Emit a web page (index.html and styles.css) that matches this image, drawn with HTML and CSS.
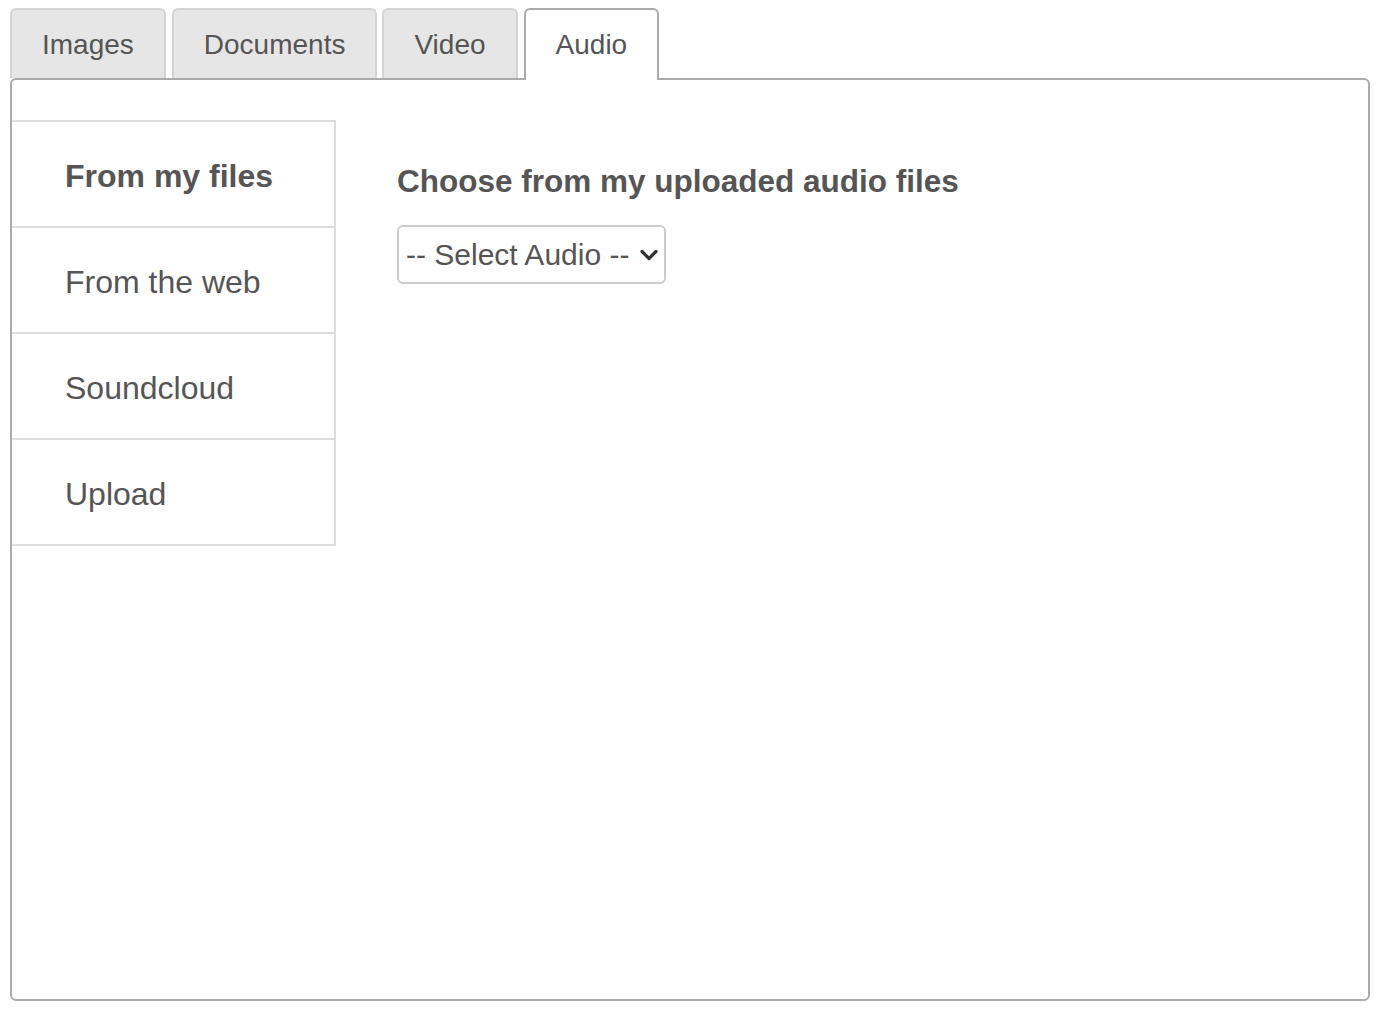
FILE: index.html
```html
<!DOCTYPE html>
<html lang="en">
<head>
<meta charset="utf-8">
<title>Media picker</title>
<link rel="stylesheet" href="styles.css">
</head>
<body>
<div class="picker">
  <div class="tabs">
    <div class="tab">Images</div>
    <div class="tab">Documents</div>
    <div class="tab">Video</div>
    <div class="tab active">Audio</div>
  </div>
  <div class="panel">
    <ul class="side">
      <li class="side-item current">From my files</li>
      <li class="side-item">From the web</li>
      <li class="side-item">Soundcloud</li>
      <li class="side-item">Upload</li>
    </ul>
    <div class="content">
      <h2 class="title">Choose from my uploaded audio files</h2>
      <div class="select-wrap">
        <select class="select">
          <option>-- Select Audio --</option>
        </select>
        <svg class="chev" width="20" height="14" viewBox="0 0 20 14"><path d="M3 3.5 L10 10.5 L17 3.5" fill="none" stroke="#333" stroke-width="3.2" stroke-linecap="round" stroke-linejoin="round"/></svg>
      </div>
    </div>
  </div>
</div>
</body>
</html>
```

FILE: styles.css
```css
* { box-sizing: border-box; }
html, body { margin: 0; padding: 0; background: #fff; }
body {
  font-family: "Liberation Sans", Arial, Helvetica, sans-serif;
  color: #555;
}
.picker {
  padding: 8px 0 0 10px;
  width: 1370px;
}
.tabs {
  display: flex;
  align-items: flex-end;
  position: relative;
  z-index: 2;
}
.tab {
  height: 70px;
  padding: 2px 30px 0;
  margin-right: 6px;
  display: flex;
  align-items: center;
  font-size: 28px;
  color: #555;
  background: #e6e6e6;
  border: 2px solid #d4d4d4;
  border-bottom: none;
  border-radius: 6px 6px 0 0;
}
.tab:nth-child(2) { margin-right: 5px; }
.tab.active {
  background: #fff;
  border-color: #aaa;
  height: 72px;
  margin-bottom: -2px;
  padding-bottom: 2px;
}
.panel {
  height: 923px;
  border: 2px solid #aaa;
  border-radius: 6px;
  padding-top: 40px;
  display: flex;
  align-items: flex-start;
}
.side {
  list-style: none;
  margin: 0;
  padding: 0;
  width: 324px;
  border-right: 2px solid #ddd;
}
.side-item {
  height: 106px;
  border-top: 2px solid #ddd;
  display: flex;
  align-items: center;
  padding: 5px 0 0 53px;
  font-size: 32px;
  color: #555;
}
.side-item:last-child {
  height: 108px;
  border-bottom: 2px solid #ddd;
}
.side-item.current { font-weight: bold; }
.content {
  padding: 43px 0 0 61px;
}
.title {
  margin: 0 0 25px;
  font-size: 31.5px;
  line-height: 37px;
  font-weight: bold;
  color: #555;
}
.select-wrap {
  position: relative;
  width: 269px;
}
.select {
  appearance: none;
  -webkit-appearance: none;
  width: 269px;
  height: 59px;
  border: 2px solid #ccc;
  border-radius: 6px;
  background: #fff;
  font-family: "Liberation Sans", Arial, Helvetica, sans-serif;
  font-size: 30px;
  color: #555;
  padding: 0 0 0 7px;
  margin: 0;
}
.chev {
  position: absolute;
  right: 7px;
  top: 23px;
  pointer-events: none;
}
```
